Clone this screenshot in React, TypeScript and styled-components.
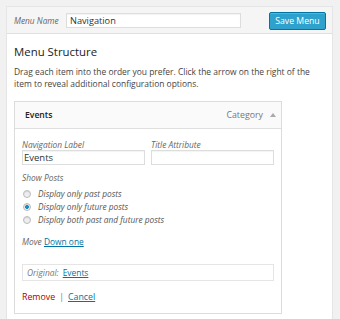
import React from 'react';
import styled, { createGlobalStyle } from 'styled-components';

const GlobalStyle = createGlobalStyle`
    html, body {
        margin: 0;
        padding: 0;
        background: #f1f1f1;
        font-family: "Open Sans", "Liberation Sans", sans-serif;
        color: #444;
        overflow: hidden;
    }
`

const radios = [
    { id: 'past', label: 'Display only past posts', checked: false },
    { id: 'future', label: 'Display only future posts', checked: true },
    { id: 'both', label: 'Display both past and future posts', checked: false },
]

export default function App() {
    return (
        <>
            <GlobalStyle />
            <Panel>
                <Header>
                    <NameLabel>Menu Name</NameLabel>
                    <NameInput defaultValue="Navigation" />
                    <SaveButton>Save Menu</SaveButton>
                </Header>

                <Body>
                    <Title>Menu Structure</Title>
                    <Description>
                        Drag each item into the order you prefer. Click the arrow on the right of the
                        item to reveal additional configuration options.
                    </Description>

                    <Item>
                        <ItemBar>
                            <ItemTitle>Events</ItemTitle>
                            <ItemType>Category</ItemType>
                            <Arrow />
                        </ItemBar>

                        <Settings>
                            <FieldRow>
                                <Field>
                                    <FieldLabel>Navigation Label</FieldLabel>
                                    <TextInput defaultValue="Events" />
                                </Field>
                                <Field>
                                    <FieldLabel>Title Attribute</FieldLabel>
                                    <TextInput />
                                </Field>
                            </FieldRow>

                            <FieldLabel>Show Posts</FieldLabel>
                            <RadioList>
                                {radios.map(r => (
                                    <RadioRow key={r.id}>
                                        <Radio $checked={r.checked} />
                                        {r.label}
                                    </RadioRow>
                                ))}
                            </RadioList>

                            <MoveRow>
                                Move <Link>Down one</Link>
                            </MoveRow>

                            <Original>
                                Original: <Link>Events</Link>
                            </Original>

                            <Actions>
                                <Remove>Remove</Remove>
                                <Sep>|</Sep>
                                <Link>Cancel</Link>
                            </Actions>
                        </Settings>
                    </Item>
                </Body>
            </Panel>
        </>
    )
}

const Panel = styled.div`
    margin: 6px 0 0 6px;
    width: 325px;
    height: 312px;
    background: #fff;
    border: 1px solid #e5e5e5;
    border-bottom: 0;
`

const Header = styled.div`
    display: flex;
    align-items: center;
    height: 26px;
    padding: 0 6px 0 7px;
    background: #f5f5f5;
    border-bottom: 1px solid #e0e0e0;
`

const NameLabel = styled.span`
    width: 52px;
    font-size: 8.3px;
    font-style: italic;
    color: #666;
`

const NameInput = styled.input`
    box-sizing: border-box;
    width: 175px;
    height: 15px;
    padding: 0 3px;
    border: 1px solid #ddd;
    box-shadow: inset 0 1px 1px rgba(0, 0, 0, .05);
    font-family: inherit;
    font-size: 9.2px;
    color: #333;
    outline: 0;
`

const SaveButton = styled.button`
    margin-left: auto;
    box-sizing: border-box;
    width: 57px;
    height: 18px;
    padding: 0;
    margin-top: 1px;
    background: #2ea2cc;
    border: 1px solid #0074a2;
    border-radius: 2px;
    box-shadow: inset 0 1px 0 rgba(120, 200, 230, .5);
    color: #fff;
    font-family: inherit;
    font-size: 8.7px;
`

const Body = styled.div`
    padding: 0 0 0 7px;
`

const Title = styled.h3`
    margin: 10px 0 0;
    font-size: 11.4px;
    font-weight: 400;
    line-height: 16px;
    color: #222;
`

const Description = styled.p`
    margin: 6px 0 0;
    font-size: 8.45px;
    line-height: 12px;
    color: #444;
    width: 305px;
`

const Item = styled.div`
    margin-top: 11px;
    width: 266px;
    border: 1px solid #dcdcdc;
`

const ItemBar = styled.div`
    display: flex;
    align-items: center;
    height: 26px;
    padding: 0 5px 0 10px;
    background: #fafafa;
    border-bottom: 1px solid #dfdfdf;
`

const ItemTitle = styled.span`
    font-size: 8.6px;
    font-weight: 600;
    color: #222;
`

const ItemType = styled.span`
    margin-left: auto;
    font-size: 8.8px;
    color: #777;
`

const Arrow = styled.span`
    margin-left: 7px;
    width: 0;
    height: 0;
    border-left: 3px solid transparent;
    border-right: 3px solid transparent;
    border-bottom: 4px solid #aaa;
`

const Settings = styled.div`
    padding: 10px 7px 10px;
`

const FieldRow = styled.div`
    display: flex;
    gap: 6px;
    margin-bottom: 7px;
`

const Field = styled.div`
    display: flex;
    flex-direction: column;
    width: 123px;
`

const FieldLabel = styled.div`
    font-size: 8.4px;
    font-style: italic;
    color: #666;
    line-height: 11px;
`

const TextInput = styled.input`
    box-sizing: border-box;
    width: 123px;
    height: 15px;
    margin: 0;
    padding: 0 1px;
    border: 1px solid #ddd;
    box-shadow: inset 0 1px 1px rgba(0, 0, 0, .05);
    font-family: inherit;
    font-size: 9.5px;
    color: #333;
    outline: 0;
`

const RadioList = styled.div`
    margin-top: 4px;
`

const RadioRow = styled.div`
    display: flex;
    align-items: center;
    height: 13px;
    font-size: 8.3px;
    font-style: italic;
    color: #555;
`

const Radio = styled.span<{ $checked: boolean }>`
    box-sizing: border-box;
    width: 8px;
    height: 8px;
    margin: 0 7px 0 1px;
    border-radius: 50%;
    border: 1px solid #bbb;
    background: ${p => p.$checked ? 'radial-gradient(circle, #1e8cbe 0 1.6px, #eee 2.2px)' : '#eee'};
    box-shadow: inset 0 1px 1px rgba(0, 0, 0, .1);
`

const MoveRow = styled.div`
    margin-top: 10px;
    font-size: 8.4px;
    font-style: italic;
    color: #666;
    line-height: 11px;
`

const Link = styled.a`
    color: #0074a2;
    text-decoration: underline;
    font-style: normal;
    cursor: pointer;
`

const Original = styled.div`
    margin-top: 17px;
    width: 252px;
    box-sizing: border-box;
    height: 17px;
    padding: 0 4px;
    display: flex;
    align-items: center;
    gap: 4px;
    border: 1px solid #e5e5e5;
    font-size: 8.4px;
    font-style: italic;
    color: #777;
`

const Actions = styled.div`
    margin-top: 10px;
    display: flex;
    align-items: center;
    height: 12px;
    font-size: 8.8px;
`

const Remove = styled.a`
    color: #a00;
`

const Sep = styled.span`
    margin: 0 4px;
    color: #777;
`
